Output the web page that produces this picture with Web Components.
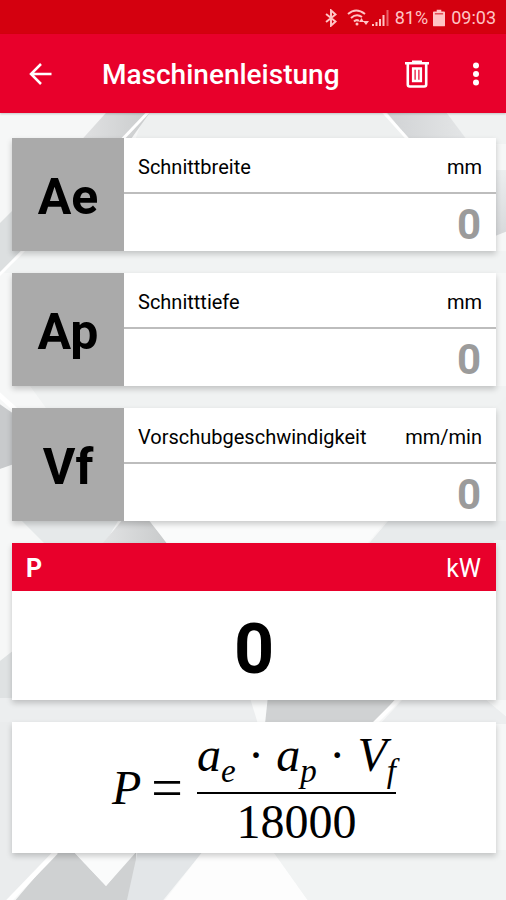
<!DOCTYPE html>
<html lang="de">
<head>
<meta charset="utf-8">
<meta name="viewport" content="width=device-width, initial-scale=1">
<title>Maschinenleistung</title>
<style>
  html, body { margin: 0; min-height: 100%; }
  body { font-family: Roboto, "Liberation Sans", sans-serif; color: #000; background: #f4f5f5; }
</style>
</head>
<body>
<power-app></power-app>
<script>
const define = (name, html) => {
  const tpl = document.createElement('template');
  tpl.innerHTML = html;
  customElements.define(name, class extends HTMLElement {
    constructor() {
      super();
      this.attachShadow({ mode: 'open' }).append(tpl.content.cloneNode(true));
    }
  });
};

define('status-bar', `
<style>
  :host { display: flex; align-items: center; justify-content: flex-end; height: 34px; box-sizing: border-box;
    padding: 2px 10px 0 0; background: #d4000f; color: #ffc4c4; font-size: 18px; line-height: 24px; }
  svg { display: block; fill: none; stroke: currentColor; }
  .bt { margin-right: 9px; } .wifi { margin-right: 3px; } .sig { margin-right: 6px; } .bat { margin: 0 6px 0 5px; }
</style>
<svg class="bt" width="14" height="18" viewBox="0 0 14 20" stroke-width="2.200"><path d="M1.500 5.500 12 14 7 18.500V1.500L12 6 1.500 14.500"/></svg>
<svg class="wifi" width="22" height="20" viewBox="0 0 22 20" stroke-width="2"><path d="M1 6Q9-1 18 6M4 10Q9.500 5 15 9M7 13.500Q9.500 11 12 13"/><circle cx="10" cy="16" r="1.500" fill="currentColor" stroke="none"/><path fill="currentColor" stroke="none" d="m12 14 2.500-4 2.500 4zM16 13h6l-3 4z"/></svg>
<svg class="sig" width="17" height="18" viewBox="0 0 17 18" stroke-width="2"><path d="M1 17v-2M4.500 17v-4M8 17v-7"/><path d="M11.500 17V6"/><path opacity=".5" d="M15.500 17V1"/></svg>
<span>81%</span>
<svg class="bat" width="12" height="18" viewBox="0 0 13 18"><path fill="currentColor" stroke="none" d="M4 0h5v2h3q1 0 1 1v14q0 1-1 1H1q-1 0-1-1V3q0-1 1-1h3z"/><path stroke="#d4000f" d="M2 4.500h9"/></svg>
<span>09:03</span>
`);

define('tool-bar', `
<style>
  :host { display: flex; align-items: center; height: 79px; box-sizing: border-box; padding: 0 6px 0 16px;
    background: #e8002b; color: #fff; box-shadow: 0 1px 2px #0003; position: relative; z-index: 1; }
  button { display: grid; place-items: center; width: 48px; height: 48px; padding: 0; border: 0; background: none; color: inherit; }
  h1 { flex: 1; margin: 0 0 0 38px; padding-top: 2px; font-size: 28px; line-height: 36px; font-weight: 500; }
  .more { margin-left: 11px; }
</style>
<button aria-label="Zurück"><svg width="24" height="24" viewBox="0 0 24 24" fill="none" stroke="currentColor" stroke-width="2.500"><path d="M13 2 3 12l10 10M3 12h20.500"/></svg></button>
<h1><slot></slot></h1>
<button aria-label="Löschen"><svg width="24" height="28" viewBox="0 0 24 28" fill="none" stroke="currentColor" stroke-width="2.600"><path d="M0 3.300h24M7 1.800h10M2.800 3v21.500q0 2 2 2h14.400q2 0 2-2V3M8.200 8.500v12.500h7.600V8.500zM12 8v13" /></svg></button>
<button class="more" aria-label="Mehr"><svg width="8" height="26" viewBox="0 0 8 26" fill="currentColor"><circle cx="4" cy="4.500" r="3"/><circle cx="4" cy="13" r="3"/><circle cx="4" cy="21.500" r="3"/></svg></button>
`);

define('facet-backdrop', `
<style>
  :host { position: absolute; inset: 0; z-index: -1; overflow: hidden; }
  svg { display: block; width: 100%; height: 100%; }
</style>
<svg viewBox="0 113 506 787" preserveAspectRatio="xMidYMid slice" aria-hidden="true">
  <defs>
    <linearGradient id="a"><stop stop-color="#e2e3e4"/><stop offset="1" stop-color="#c8cacb"/></linearGradient>
    <linearGradient id="b"><stop stop-color="#cfd1d3"/><stop offset="1" stop-color="#e6e8e9"/></linearGradient>
    <linearGradient id="c" x2="0" y2="1"><stop stop-color="#eceeef"/><stop offset="1" stop-color="#d6d8da"/></linearGradient>
    <filter id="soft"><feGaussianBlur stdDeviation=".7"/></filter>
  </defs>
  <path fill="#f6f7f7" d="M-9 104h524v805H-9z"/>
  <g filter="url(#soft)">
    <path fill="#eef0f0" d="M148 104h238l22 36v20H128z"/>
    <path fill="url(#a)" d="M114 104h42l-30 42H76z"/>
    <path stroke="#fff" stroke-width="3" d="m156 104-40 42"/>
    <path fill="url(#b)" d="M380 104h60l36 44h-60z"/>
    <path stroke="#fff" stroke-width="3" d="m378 106 36 40"/>
    <path fill="#f0f2f2" d="m440 104 30 40h45v-40z"/>
    <path fill="url(#c)" d="M490 170h25v58l-25 10z"/>
    <path fill="#dcdfe0" d="M-9 232l30-30v49L-9 283z"/>
    <path fill="#f1f3f3" d="M22 251h493v22H4z"/>
    <path stroke="#fff" stroke-width="3" d="M24 250-6 280"/>
    <path fill="#f0f2f2" d="M30 386h476v22H46z"/>
    <path stroke="#fff" stroke-width="5" d="m-4 392 22 20"/>
    <path fill="#c8cacc" d="m-9 398 23 16v50l-23 8z"/>
    <path fill="#eff1f1" d="m494 408 21-20v150h-21z"/>
    <path fill="#e6e9ea" d="M22 521h96l-14 24H46z"/>
    <path fill="url(#a)" d="M124 518h23l21 26h-66z"/>
    <path fill="#fafbfb" d="M150 521h236l-20 24H168z"/>
    <path fill="#e8ebec" d="M388 521h127v26H366z"/>
    <path fill="#eff1f1" d="M494 540h21v160h-21z"/>
    <path fill="#dfe2e3" d="m-9 668 23-18v60H-9z"/>
    <path fill="#eceeef" d="M-9 698h261l14 26H-9z"/>
    <path fill="#f9fafa" d="m250 698 18 2-2 24h-8z"/>
    <path fill="#d0d2d3" d="M268 696h130l-24 28H265z"/>
    <path stroke="#fff" stroke-width="4" d="m400 698-26 26"/>
    <path fill="#eceeef" d="M404 698h80l31 26H380z"/>
    <path fill="#eaeced" d="M-9 722h22v131h43L4 909H-9z"/>
    <path fill="#cfd1d2" d="M58 850h14l34 36 30-36v16l-10 43H8z"/>
    <path stroke="#fff" stroke-width="5" d="M56 852 2 908"/>
    <path fill="#fafbfb" d="m72 850 34 36 32-36z"/>
    <path fill="#e3e6e8" d="M138 850h66l-48 59h-31z"/>
    <path fill="#fdfdfd" d="M204 850h68l42 59H158z"/>
    <path fill="#f1f3f3" d="M272 850h243v59H314z"/>
  </g>
</svg>
`);

customElements.define('value-field', class extends HTMLElement {
  connectedCallback() {
    const { symbol, label, unit } = this.dataset;
    this.attachShadow({ mode: 'open' }).innerHTML = `
<style>
  :host { display: grid; grid-template-columns: 112px 1fr; height: 113px; background: #fff; box-shadow: 0 3px 6px #0003; }
  .symbol { display: grid; place-items: center; padding-top: 5px; background: #aaa; font-size: 50px; line-height: 60px; font-weight: 700; }
  .body { display: grid; grid-template-rows: 56px 1fr; min-width: 0; }
  label { display: flex; align-items: center; justify-content: space-between; padding: 4px 14px 0 14px;
    font-size: 20px; line-height: 24px; border-bottom: 2px solid #bdbdbd; }
  input { width: 100%; min-width: 0; box-sizing: border-box; padding: 5px 15px 0 14px; border: 0; outline: 0; background: none;
    text-align: right; font: 700 42px/48px Roboto, sans-serif; color: #9b9b9b; }
</style>
<div class="symbol">${symbol}</div>
<div class="body">
  <label for="v"><span>${label}</span><span>${unit}</span></label>
  <input id="v" inputmode="decimal" value="0">
</div>`;
  }
});

define('result-card', `
<style>
  :host { display: block; background: #fff; box-shadow: 0 3px 6px #0003; }
  header { display: flex; justify-content: space-between; align-items: center; height: 48px; box-sizing: border-box;
    padding: 4px 15px 0 14px; background: #e8002b; color: #fff; font-size: 25px; line-height: 32px; }
  output { display: grid; place-items: center; height: 109px; box-sizing: border-box; padding-top: 6px;
    font-size: 70px; line-height: 80px; font-weight: 700; }
</style>
<header><b><slot name="symbol"></slot></b><span><slot name="unit"></slot></span></header>
<output><slot></slot></output>
`);

define('formula-card', `
<style>
  :host { display: flex; justify-content: center; align-items: center; height: 131px; background: #fff;
    box-shadow: 0 3px 6px #0003; font-family: "Liberation Serif", serif; font-size: 48px; line-height: 56px; }
  .eq { margin: 0 14px 0 10px; font-size: 56px; }
  .num { display: flex; justify-content: space-between; width: 199px; height: 69px; line-height: 60px; box-sizing: border-box; border-bottom: 2px solid #000; }
  .den { text-align: center; }
  sub { font-size: 33px; line-height: 0; vertical-align: -11px; }
</style>
<i>P</i><span class="eq">=</span>
<div><div class="num"><i>a<sub>e</sub></i><span>·</span><i>a<sub>p</sub></i><span>·</span><i>V<sub>f</sub></i></div><div class="den">18000</div></div>
`);

define('power-app', `
<style>
  :host { display: flex; flex-direction: column; min-height: 100vh; }
  main { position: relative; z-index: 0; flex: 1; display: flex; flex-direction: column; gap: 22px; padding: 25px 10px 24px 12px; }
</style>
<status-bar></status-bar>
<tool-bar>Maschinenleistung</tool-bar>
<main>
  <facet-backdrop></facet-backdrop>
  <value-field data-symbol="Ae" data-label="Schnittbreite" data-unit="mm"></value-field>
  <value-field data-symbol="Ap" data-label="Schnitttiefe" data-unit="mm"></value-field>
  <value-field data-symbol="Vf" data-label="Vorschubgeschwindigkeit" data-unit="mm/min"></value-field>
  <result-card><span slot="symbol">P</span><span slot="unit">kW</span>0</result-card>
  <formula-card></formula-card>
</main>
`);
</script>
</body>
</html>
